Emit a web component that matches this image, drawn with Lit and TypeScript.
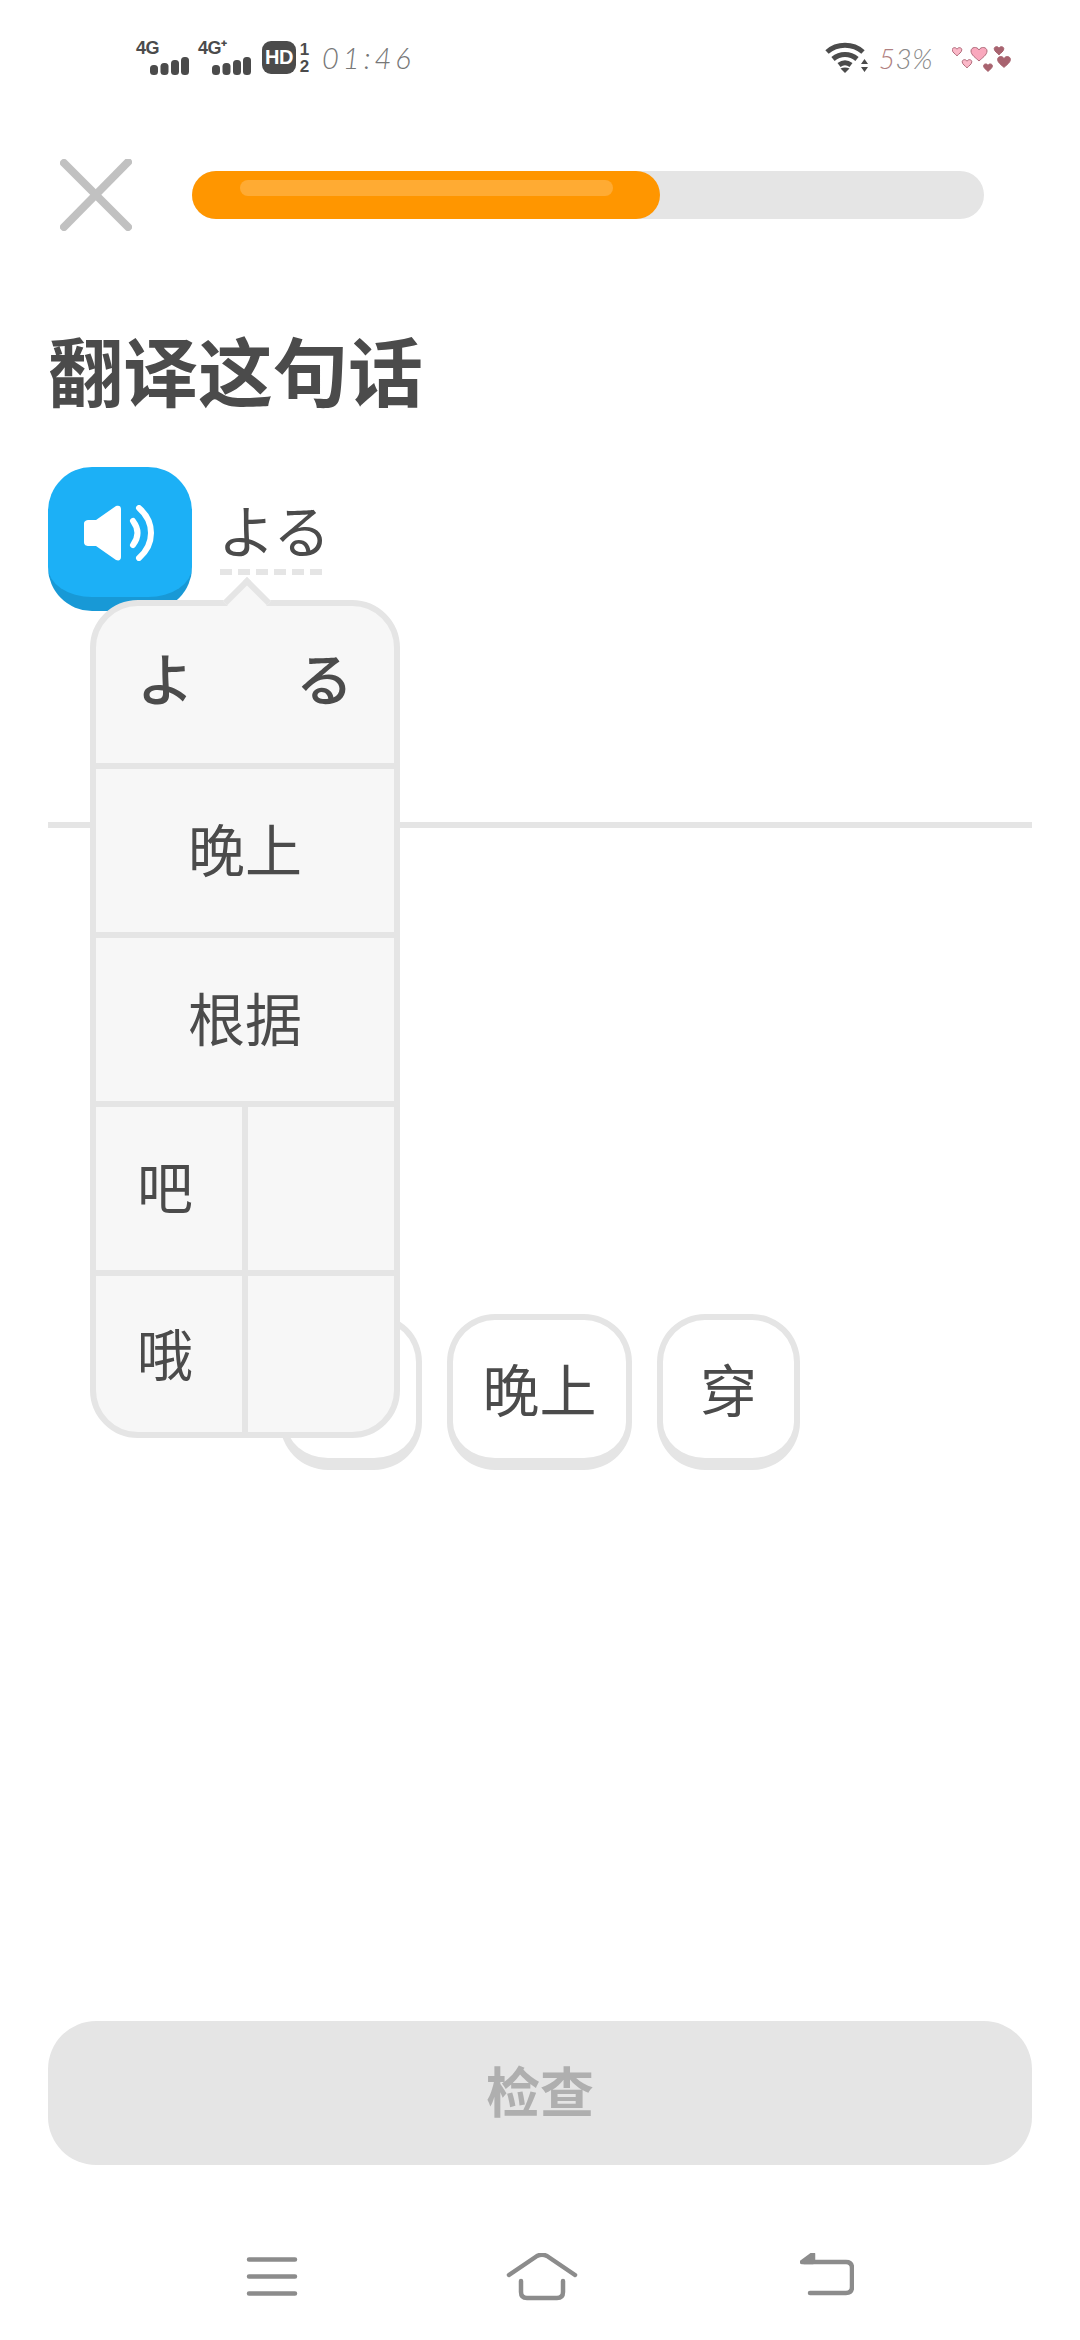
import { LitElement, html, css, svg } from "lit";
import { customElement } from "lit/decorators.js";

const bars = svg`<svg class="bars" width="39" height="18" viewBox="0 0 39 18" fill="#4b4b4b">
  <rect x="0" y="8" width="8" height="10" rx="3.500"/><rect x="10.500" y="6" width="8" height="12" rx="3.500"/>
  <rect x="21" y="3" width="8" height="15" rx="3.500"/><rect x="31" y="0" width="8" height="18" rx="3.500"/></svg>`;

const heart = (x: number, y: number, s: number, fill: string, stroke: string) => svg`
  <path transform="translate(${x} ${y}) scale(${s})" fill=${fill} stroke=${stroke} stroke-width=${1 / s}
    d="M0 -3C-2 -7 -8 -6 -8 -2C-8 2 -3 5 0 8C3 5 8 2 8 -2C8 -6 2 -7 0 -3Z"/>`;

@customElement("app-root")
export class AppRoot extends LitElement {
  static styles = css`
    :host { display: flex; flex-direction: column; width: 1080px; height: 2340px; background: #fff; color: #4b4b4b; position: relative; overflow: hidden;
      font-family: "Noto Sans CJK SC", "Noto Sans", sans-serif; }
    .status { height: 140px; display: flex; align-items: center; padding: 0 68px 25px 136px; box-sizing: border-box; flex: none; }
    .net { position: relative; width: 53px; height: 34px; margin-right: 9px; }
    .net .lbl { position: absolute; left: 0; top: -3px; font: 700 18px/20px "Liberation Sans", sans-serif; letter-spacing: -0.5px; }
    .net .bars { position: absolute; right: 0; bottom: 0; }
    .hd { width: 34px; height: 33px; border-radius: 9px; background: #4b4b4b; color: #fff; font: 700 20px/33px "Liberation Sans", sans-serif; text-align: center; margin-left: 2px; letter-spacing: -0.5px; }
    .frac { display: flex; flex-direction: column; font: 700 17px/17px "Liberation Sans", sans-serif; margin: 0 11px 0 2px; text-align: center; width: 13px; }
    .time { font: italic 300 29px/34px Lato, sans-serif; letter-spacing: 4px; color: #777; }
    .right { margin-left: auto; display: flex; align-items: center; }
    .pct { font: italic 300 28px/34px Lato, sans-serif; color: #888; letter-spacing: 0.5px; margin: 0 19px 0 10px; }
    .pct span { color: #b08080; }

    .header { height: 110px; flex: none; display: flex; align-items: center; padding-left: 60px; gap: 60px; }
    .close { width: 72px; height: 72px; display: block; }
    .track { width: 792px; height: 48px; border-radius: 24px; background: #e5e5e5; position: relative; }
    .fill { width: 468px; height: 48px; border-radius: 24px; background: #ff9600; padding: 9px 47px 0 48px; box-sizing: border-box; }
    .shine { height: 16px; border-radius: 8px; background: #ffab33; }

    h1 { margin: 74px 0 0 48px; font-size: 75px; line-height: 90px; font-weight: 700; color: #4b4b4b; flex: none; }

    .sentence { margin: 53px 0 0 48px; height: 143px; display: flex; position: relative; flex: none; }
    .speak { width: 144px; height: 144px; box-sizing: border-box; border-radius: 44px; background: #1cb0f6; border-bottom: 14px solid #1899d6; display: flex; align-items: center; justify-content: center; padding: 1px 0 0 2px; }
    .jp { margin-left: 28px; width: 105px; height: 108px; display: flex; flex-direction: column; white-space: nowrap; }
    .jp-text { height: 81px; padding-top: 20px; margin-left: -2px; box-sizing: border-box; font: 400 57px/82px "Noto Sans CJK JP", sans-serif; display: block; flex: none; }
    .dash { margin-top: 21px; height: 6px; width: 105px; flex: none; background: repeating-linear-gradient(90deg, #e5e5e5 0 12px, transparent 12px 18px); }

    .divider { margin: 212px 48px 0; height: 6px; background: #e5e5e5; flex: none; }

    .chips { margin: 486px 0 0 280px; display: flex; gap: 25px; flex: none; }
    .chip { box-sizing: border-box; height: 156px; border: 6px solid #e5e5e5; border-bottom-width: 12px; border-radius: 48px; background: #fff; display: flex; align-items: center; justify-content: center; font-size: 57px; line-height: 1; padding-bottom: 4px; }
    .chip.a { width: 142px; }
    .chip.b { width: 185px; }
    .chip.c { width: 143px; }

    .tip { position: absolute; left: 42px; top: 133px; width: 310px; height: 838px; box-sizing: border-box; border: 6px solid #e5e5e5; border-radius: 48px; background: #f7f7f7; z-index: 2; display: flex; flex-direction: column; }
    .arrow { position: absolute; left: 134px; top: -22px; width: 34px; height: 34px; transform: rotate(45deg); box-sizing: border-box; background: #f7f7f7; border: solid #e5e5e5; border-width: 6px 0 0 6px; }
    .row { display: grid; grid-template-columns: 146px 1fr; flex: none; height: 163px; border-top: 6px solid #e5e5e5; font-size: 57px; line-height: 1; position: relative; }
    .row.wide { grid-template-columns: 1fr; }
    .row.first { grid-template-columns: 1fr 1fr; border-top: 0; height: 157px; font: 500 57px/1 "Noto Sans CJK JP", sans-serif; }
    .row.last { height: 162px; }
    .cell { box-sizing: border-box; min-width: 0; display: flex; align-items: center; justify-content: center; }
    .row.wide .cell { padding-bottom: 7px; }
    .cell + .cell { border-left: 6px solid #e5e5e5; }
    .row.first .cell + .cell { border-left: 0; }
    .row.first .cell { padding-bottom: 16px; padding-right: 10px; }
    .row.first .cell + .cell { padding-right: 0; padding-left: 10px; }
    .row .left { justify-content: flex-start; padding-left: 41px; font-size: 56px; padding-bottom: 8px; }
    .row.last .left { padding-bottom: 10px; }

    .check { margin: auto 48px 0; height: 144px; border-radius: 48px; background: #e5e5e5; color: #afafaf; font-size: 54px; font-weight: 700; display: flex; align-items: center; justify-content: center; flex: none; padding-bottom: 8px; box-sizing: border-box; }
    .nav { height: 175px; flex: none; display: flex; align-items: flex-start; padding: 92px 0 0 246px; box-sizing: border-box; }
    .nav svg { display: block; }
    .home { margin-left: 208px; margin-top: -4px; }
    .back { margin-left: 222px; margin-top: -4px; }
  `;

  render() {
    return html`
      <div class="status">
        <div class="net"><span class="lbl">4G</span>${bars}</div>
        <div class="net"><span class="lbl">4G⁺</span>${bars}</div>
        <div class="hd">HD</div>
        <div class="frac"><span>1</span><span>2</span></div>
        <div class="time">01:46</div>
        <div class="right">
          <svg width="44" height="32" viewBox="0 0 44 32" fill="none" stroke="#4b4b4b" stroke-width="5">
            <path d="M2 10C12 1 28 1 38 10"/><path d="M8 17C15 11 25 11 32 17"/><path d="M14 23C18 20 22 20 26 23"/>
            <path d="M20 31L15.500 26.500C18 25 22 25 24.500 26.500Z" fill="#4b4b4b" stroke="none"/>
            <path d="M36 22L39.500 17L43 22Z M36 25L43 25L39.500 30Z" fill="#4b4b4b" stroke="none"/>
          </svg>
          <div class="pct"><span>5</span>3%</div>
          <svg width="60" height="28" viewBox="0 0 60 28">
            ${heart(5, 7, 0.6, "#fbb8c8", "#b06a7a")}
            ${heart(27, 9, 1.0, "#f9a8bd", "#b06a7a")}
            ${heart(47, 6, 0.6, "#a8636f", "#a8636f")}
            ${heart(15, 19, 0.6, "#fbb8c8", "#b06a7a")}
            ${heart(36, 23, 0.55, "#a8636f", "#a8636f")}
            ${heart(52, 17, 0.8, "#a8636f", "#a8636f")}
          </svg>
        </div>
      </div>

      <div class="header">
        <svg class="close" viewBox="0 0 72 72" fill="none" stroke="#c1c1c1" stroke-width="8" stroke-linecap="round">
          <path d="M4 4L68 68"/><path d="M68 3L4 68"/>
        </svg>
        <div class="track"><div class="fill"><div class="shine"></div></div></div>
      </div>

      <h1>翻译这句话</h1>

      <div class="sentence">
        <div class="speak">
          <svg width="76" height="56" viewBox="0 0 76 56" fill="#fff">
            <path d="M1 19C1 16 3 15 6 15H13L33 1C36 0 38 1 38 4V52C38 55 36 56 33 55L13 41H6C3 41 1 40 1 37Z"/>
            <path d="M50 16C56 24 56 32 50 40" fill="none" stroke="#fff" stroke-width="6" stroke-linecap="round"/>
            <path d="M56 3C72 17 72 39 56 53" fill="none" stroke="#fff" stroke-width="6" stroke-linecap="round"/>
          </svg>
        </div>
        <div class="jp"><span class="jp-text">よる</span><div class="dash"></div></div>
        <div class="tip">
          <div class="arrow"></div>
          <div class="row first"><div class="cell">よ</div><div class="cell">る</div></div>
          <div class="row wide"><div class="cell">晚上</div></div>
          <div class="row wide"><div class="cell">根据</div></div>
          <div class="row"><div class="cell left">吧</div><div class="cell"></div></div>
          <div class="row last"><div class="cell left">哦</div><div class="cell"></div></div>
        </div>
      </div>

      <div class="divider"></div>

      <div class="chips">
        <div class="chip a"></div>
        <div class="chip b">晚上</div>
        <div class="chip c">穿</div>
      </div>

      <div class="check">检查</div>

      <div class="nav">
        <svg width="52" height="40" viewBox="0 0 52 40" stroke="#8c8c8c" stroke-width="4.500" stroke-linecap="round">
          <path d="M3 2.500H49M3 19.500H49M3 36.500H49"/>
        </svg>
        <svg class="home" width="72" height="48" viewBox="0 0 72 48" fill="none" stroke="#8c8c8c" stroke-width="4.500" stroke-linecap="round" stroke-linejoin="round">
          <path d="M3 22L31 3C34 1.500 38 1.500 41 3L69 22"/>
          <path d="M15 28V39C15 43 17 45 21 45H51C55 45 57 43 57 39V28"/>
        </svg>
        <svg class="back" width="54" height="44" viewBox="0 0 54 44" fill="none" stroke="#8c8c8c" stroke-width="4.500" stroke-linecap="round" stroke-linejoin="round">
          <path d="M4 9H46C50 9 52 11 52 15V34C52 38 50 40 46 40H10"/>
          <path d="M2 9L13 1V9Z" fill="#8c8c8c"/>
        </svg>
      </div>
    `;
  }
}
